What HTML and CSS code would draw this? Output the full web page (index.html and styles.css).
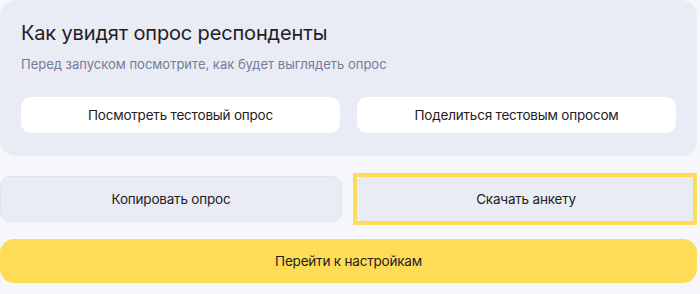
FILE: index.html
```html
<!DOCTYPE html>
<html lang="ru">
<head>
  <meta charset="UTF-8" />
  <meta name="viewport" content="width=device-width, initial-scale=1.0"/>
  <title>Опрос</title>
  <link rel="stylesheet" href="styles.css">
</head>
<body>
  <div class="painel">
    <div class="cartao">
      <h2>Как увидят опрос респонденты</h2>
      <p>Перед запуском посмотрите, как будет выглядеть опрос</p>
      <div class="botoes">
        <button class="branco">Посмотреть тестовый опрос</button>
        <button class="branco">Поделиться тестовым опросом</button>
      </div>
    </div>

    <div class="acoes">
      <button class="cinza">Копировать опрос</button>
      <button class="cinza foco">Скачать анкету</button>
    </div>

    <button class="amarelo">Перейти к настройкам</button>
  </div>
</body>
</html>
```

FILE: styles.css
```css
* {
  margin: 0; padding: 0; box-sizing: border-box;
  font-family: Inter, "Noto Sans", Arial, sans-serif;
}
body, html {
  height: 100%;
  background: #f6f7fb;
}
.painel {
  width: 697px;
}
.cartao {
  background: #e9ecf5;
  border-radius: 16px;
  padding: 19px 21px 23px;
}
.cartao h2 {
  font-size: 20px;
  line-height: 28px;
  font-weight: 400;
  letter-spacing: -0.15px;
  color: #1f2024;
}
.cartao p {
  margin-top: 7px;
  font-size: 13px;
  line-height: 20px;
  color: #757b98;
}
.botoes {
  display: grid;
  grid-template-columns: 1fr 1fr;
  gap: 17px;
  margin-top: 23px;
}
button {
  cursor: pointer;
  text-align: center;
  font-size: 13.5px;
  letter-spacing: -0.2px;
  color: #1f2024;
  border: none;
}
.branco {
  height: 36px;
  background: #fff;
  border-radius: 10px;
}
.acoes {
  display: grid;
  grid-template-columns: 342px 342px;
  gap: 13px;
  margin-top: 20px;
}
.cinza {
  height: 46px;
  background: #e9ecf5;
  border: 1px solid #e1e4ee;
  border-radius: 10px;
}
.foco {
  position: relative;
}
.foco::after {
  content: "";
  position: absolute;
  top: -4px;
  bottom: -4px;
  left: -3px;
  right: -1px;
  border: 4px solid #ffdc55;
}
.amarelo {
  display: block;
  width: 100%;
  height: 44px;
  margin-top: 17px;
  background: #ffdc55;
  border-radius: 14px;
}
```
